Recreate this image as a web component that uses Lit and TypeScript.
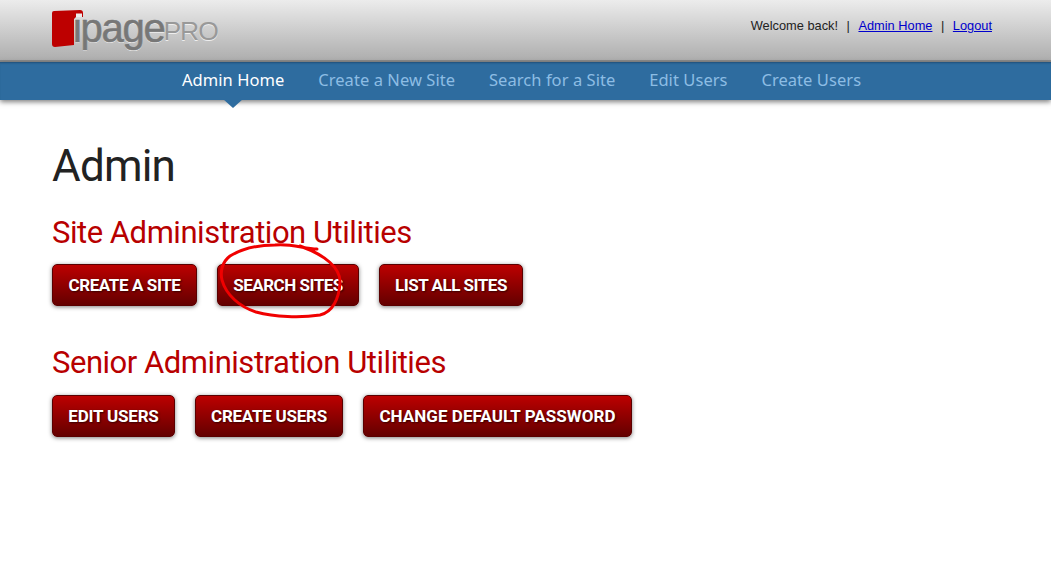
import { LitElement, html, css } from "lit";
import { customElement } from "lit/decorators.js";

const siteButtons = [
  { label: "CREATE A SITE", w: 145, ls: -0.4 },
  { label: "SEARCH SITES", w: 142, ls: -0.5 },
  { label: "LIST ALL SITES", w: 144, ls: -0.5 },
];
const seniorButtons = [
  { label: "EDIT USERS", w: 123, ls: -0.2 },
  { label: "CREATE USERS", w: 148, ls: -0.25 },
  { label: "CHANGE DEFAULT PASSWORD", w: 269, ls: 0.05 },
];

@customElement("app-root")
export class AppRoot extends LitElement {
  static styles = css`
    :host { display: block; height: 564px; background: #fff; position: relative; overflow: hidden; font-family: Roboto, sans-serif; }
    .top { height: 60px; background: linear-gradient(#ececec, #aeaeae); border-bottom: 2px solid #8a8a8a; display: flex; justify-content: space-between; padding: 0 59px 0 52px; }
    .logo { display: flex; align-items: flex-start; height: 60px; position: relative; }
    .mark { position: absolute; left: 0; top: 9px; width: 32px; height: 39px; }
    .ipage { font-family: "Liberation Sans", sans-serif; font-size: 40px; line-height: 56px; letter-spacing: -1.3px; color: #777; margin-left: 21px; -webkit-text-stroke: 0.6px #777; text-shadow: 0 1px 0 #eee; }
    .pro { font-family: "Liberation Sans", sans-serif; font-size: 26.5px; line-height: 62px; color: #999; letter-spacing: -1px; margin-left: -1px; text-shadow: 0 1px 0 #eee; }
    .util { font-family: "Liberation Sans", sans-serif; font-size: 12.8px; color: #222; padding-top: 18px; display: flex; gap: 5px; white-space: pre; }
    .util a { color: #00c; text-decoration: underline; }
    nav { height: 38px; box-sizing: border-box; padding: 0 0 4px 182px; background: #2e6c9f; display: flex; gap: 33.8px; align-items: center; box-shadow: inset 0 2px 2px -1px #204f78, 0 2px 5px rgba(0,0,0,.5); position: relative; }
    nav span { font-family: "Noto Sans", sans-serif; font-size: 16.5px; letter-spacing: .06px; color: #8dbde4; white-space: nowrap; }
    nav span.on { color: #fff; position: relative; }
    nav span.on::after { content: ""; position: absolute; left: 50%; margin-left: -10px; top: 31px; border: 10px solid transparent; border-top: 9px solid #2e6c9f; border-bottom: 0; }
    main { padding: 38px 52px 0; }
    h1 { margin: 0; font-size: 44px; line-height: 56px; font-weight: 400; color: #222; letter-spacing: -0.8px; }
    h2 { margin: 18px 0 0; font-size: 31px; line-height: 42px; font-weight: 400; color: #b80000; letter-spacing: -0.47px; }
    .row { display: flex; gap: 20px; margin: 10px 0 0; }
    .row + h2 { margin-top: 36px; }
    .row:last-child { margin-top: 11px; }
    .btn { height: 42px; box-sizing: border-box; display: flex; align-items: center; justify-content: center; border-radius: 5px; border: 1px solid #5a0000; background: linear-gradient(#bc0000, #640000); color: #fff; font-size: 17px; font-weight: 700; white-space: nowrap; text-shadow: 1px 1px 2px #300; box-shadow: 0 1px 4px rgba(0,0,0,.5); }
    .ink { position: absolute; left: 215px; top: 240px; width: 135px; height: 85px; pointer-events: none; }
  `;
  private buttons(items: { label: string; w: number; ls: number }[]) {
    return html`<div class="row">${items.map(
      (b) => html`<div class="btn" style="width:${b.w}px;letter-spacing:${b.ls}px">${b.label}</div>`
    )}</div>`;
  }
  render() {
    return html`
      <div class="top">
        <div class="logo">
          <span class="ipage">ipage</span><span class="pro">PRO</span>
          <svg class="mark" viewBox="0 0 32 39"><path d="M2 2 L28 1 Q31 1 31 4 L31 8 L24 8 L22 10 L22 36 L3 38 Q0 38 0 35 L0 4 Q0 2 2 2Z" fill="#bd0000"/><rect x="24" y="4.5" width="6" height="3.5" fill="#ececec"/></svg>
        </div>
        <div class="util"><span>Welcome back!</span><span> | </span><a>Admin Home</a><span> | </span><a>Logout</a></div>
      </div>
      <nav>
        <span class="on">Admin Home</span><span>Create a New Site</span><span>Search for a Site</span><span>Edit Users</span><span>Create Users</span>
      </nav>
      <main>
        <h1>Admin</h1>
        <h2>Site Administration Utilities</h2>
        ${this.buttons(siteButtons)}
        <h2>Senior Administration Utilities</h2>
        ${this.buttons(seniorButtons)}
      </main>
      <svg class="ink" viewBox="215 240 135 85" fill="none" stroke="#f00000" stroke-width="3" stroke-linecap="round" stroke-linejoin="round">
        <path d="M317 249 C305 249 290 243 275 245 C255 245 240 250 230 256 C222 262 220 272 222 280 C226 295 240 307 256 312 C275 317 300 318 320 315 C333 312 339 298 340 283 C341 268 325 255 300 246"/>
      </svg>
    `;
  }
}
